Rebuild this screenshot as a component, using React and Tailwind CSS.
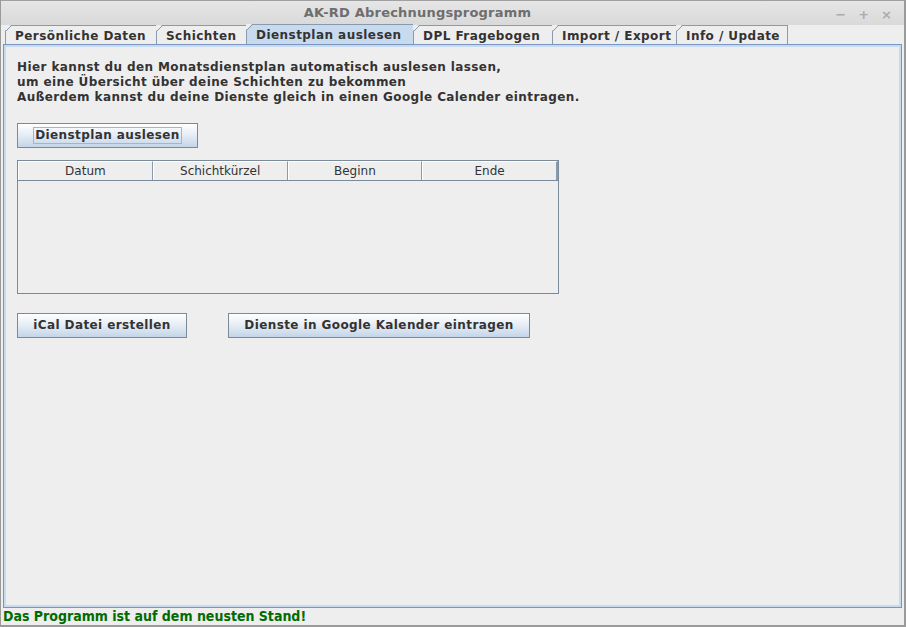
import React from 'react';

const TABS = [
    { label: 'Persönliche Daten', w: 'w-[151px]' },
    { label: 'Schichten', w: 'w-[90px]' },
    { label: 'Dienstplan auslesen', w: 'w-[167px]', active: true },
    { label: 'DPL Fragebogen', w: 'w-[139px]' },
    { label: 'Import / Export', w: 'w-[124px]' },
    { label: 'Info / Update', w: 'w-[112px]', last: true },
];

const COLUMNS = ['Datum', 'Schichtkürzel', 'Beginn', 'Ende'];

function Tab({ tab }) {
    return (
        <div
            className={`relative h-[19px] flex items-center pl-[9px] border-t border-l border-[#8a9aae] ${tab.last ? 'border-r' : ''} ${tab.w} ${tab.active ? 'bg-[#c8daee] h-[20px]' : 'bg-[#eeeeee]'}`}
        >
            {/* schraege Ecke oben links */}
            <svg className="absolute -left-px -top-px" width="7" height="7" viewBox="0 0 7 7">
                <polygon points="0,0 6,0 0,6" fill="#eeeeee" />
                <line x1="0.5" y1="6.5" x2="6.5" y2="0.5" stroke="#8a9aae" strokeWidth="1" />
            </svg>
            <span className="font-bold text-[12px] tracking-[0.45px] text-[#333333] leading-none pt-[1px]">{tab.label}</span>
        </div>
    );
}

function MetalButton({ children, className = '', focused = false }) {
    return (
        <button
            className={`h-[25px] flex items-center justify-center border border-[#7a8a99] bg-gradient-to-b from-[#ffffff] via-[#e4ecf5] to-[#c4d5e8] text-[12px] font-bold tracking-[0.4px] text-[#333333] ${className}`}
        >
            <span className={`px-[1px] leading-[15px] ${focused ? 'outline outline-1 outline-[#9fb6cf]' : ''}`}>{children}</span>
        </button>
    );
}

export default function App() {
    return (
        <div
            className="w-[906px] h-[627px] flex flex-col bg-[#eeeeee] border-r-2 border-b-2 border-l border-[#9a9a9a] overflow-hidden"
            style={{ fontFamily: '"DejaVu Sans", "Liberation Sans", sans-serif' }}
        >
            {/* Titelleiste */}
            <div className="h-[25px] shrink-0 relative flex items-center justify-center pr-[70px] bg-gradient-to-b from-[#e6e6e6] to-[#d9d9d9] border-t border-[#a0a0a0]">
                <span className="font-bold text-[13px] tracking-[0.2px] text-[#6e6e6e]">AK-RD Abrechnungsprogramm</span>
                <div className="absolute right-[12px] top-[4px] flex gap-[12px] text-[13px] text-[#ababab] font-bold">
                    <span>−</span>
                    <span>+</span>
                    <span>×</span>
                </div>
            </div>

            {/* Reiter */}
            <div className="h-[19px] shrink-0 flex items-end pl-[4px]">
                {TABS.map((tab) => (
                    <Tab key={tab.label} tab={tab} />
                ))}
            </div>

            {/* Inhalt */}
            <div className="mx-[2px] flex-1 border border-[#7a95c0]">
                <div className="h-full border-2 border-[#c8daee] pl-[11px] pt-[13px]">
                    <div className="text-[12px] font-bold tracking-[0.4px] text-[#333333] leading-[15px]">
                        <div>Hier kannst du den Monatsdienstplan automatisch auslesen lassen,</div>
                        <div>um eine Übersicht über deine Schichten zu bekommen</div>
                        <div>Außerdem kannst du deine Dienste gleich in einen Google Calender eintragen.</div>
                    </div>

                    <MetalButton className="w-[181px] mt-[18px]" focused>
                        Dienstplan auslesen
                    </MetalButton>

                    <div className="mt-[12px] w-[542px] h-[134px] border border-[#7a8a99] flex flex-col">
                        <div className="h-[20px] flex border-b border-[#7a8a99]">
                            {COLUMNS.map((c, i) => (
                                <div
                                    key={c}
                                    className={`flex-1 flex items-center justify-center text-[12px] text-[#333333] border-l border-t border-white ${i < 3 ? 'border-r-[#8a9aae] border-r' : 'border-r-2 border-r-[#8a9aae]'}`}
                                >
                                    {c}
                                </div>
                            ))}
                        </div>
                        <div className="flex-1 bg-[#eeeeee]" />
                    </div>

                    <div className="mt-[19px] flex gap-[41px]">
                        <MetalButton className="w-[170px]">iCal Datei erstellen</MetalButton>
                        <MetalButton className="w-[302px]">Dienste in Google Kalender eintragen</MetalButton>
                    </div>
                </div>
            </div>

            {/* Statuszeile */}
            <div className="h-[17px] shrink-0 flex items-center pl-[2px]">
                <span
                    className="text-[14px] font-bold text-[#006b00]"
                    style={{ fontFamily: '"DejaVu Sans Condensed", "DejaVu Sans", sans-serif', fontStretch: 'condensed' }}
                >
                    Das Programm ist auf dem neusten Stand!
                </span>
            </div>
        </div>
    );
}
